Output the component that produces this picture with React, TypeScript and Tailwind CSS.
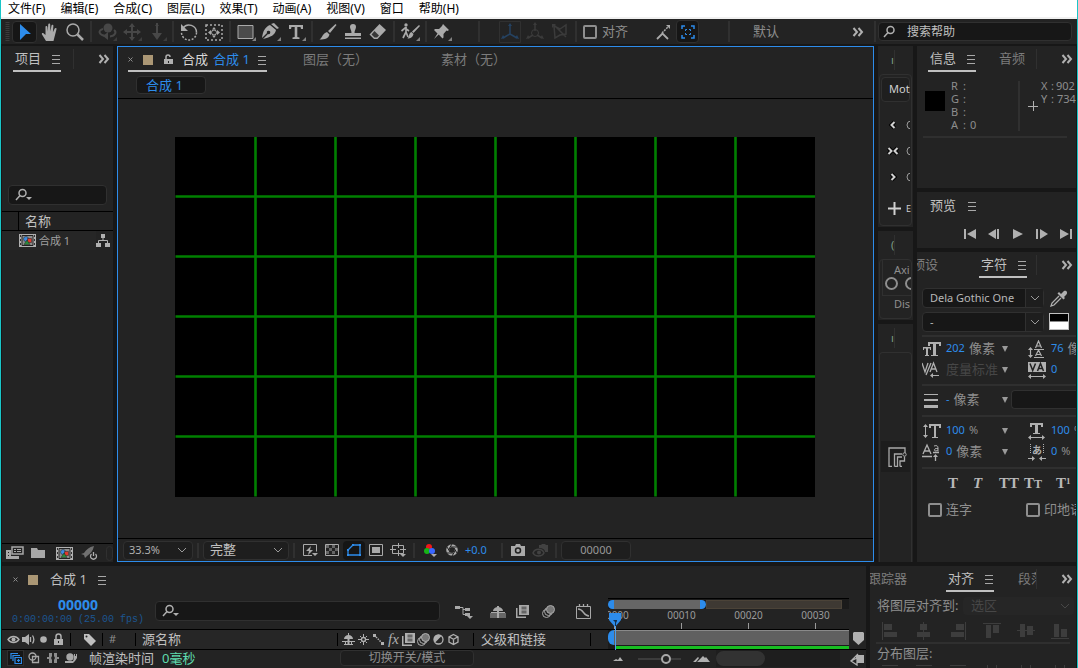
import React, { useState } from 'react';

type Kids = { children?: React.ReactNode };

const menus = ['文件(F)', '编辑(E)', '合成(C)', '图层(L)', '效果(T)', '动画(A)', '视图(V)', '窗口', '帮助(H)'];

/* ---------- small shared pieces ---------- */

const Svg = ({ w = 20, h = 20, className = '', children }: Kids & { w?: number; h?: number; className?: string }) => (
  <svg width={w} height={h} viewBox={`0 0 ${w} ${h}`} fill="currentColor" className={`shrink-0 ${className}`} aria-hidden="true">
    {children}
  </svg>
);

const Line = ({ d, w = 1 }: { d: string; w?: number }) => <path d={d} fill="none" stroke="currentColor" strokeWidth={w} />;

const ToolSep = () => (
  <div className="w-[7px] shrink-0 flex justify-center self-stretch py-[2px]">
    <div className="w-[2px] bg-[#303030]" />
  </div>
);

const FootSep = () => (
  <div className="w-[10px] shrink-0 flex justify-center">
    <div className="w-[2px] h-[15px] bg-[#303030]" />
  </div>
);

const MenuLines = () => (
  <button aria-label="面板菜单" className="text-[#a8a8a8]">
    <Svg w={10} h={10}>
      <Line d="M1 1.5h8M1 5.5h8M1 9.5h8" />
    </Svg>
  </button>
);

const More = () => (
  <button aria-label="更多" className="text-[#b0b0b0]">
    <Svg w={12} h={10}>
      <Line d="M1.5 1l3.500 4-3.500 4M6.500 1l3.500 4-3.500 4" w={2} />
    </Svg>
  </button>
);

const Chevron = ({ className = 'text-[#9a9a9a]' }: { className?: string }) => (
  <Svg w={10} h={10} className={className}>
    <Line d="M1 3l4 4 4-4" />
  </Svg>
);

const Drop = () => (
  <Svg w={8} h={8} className="text-[#9a9a9a]">
    <path d="M1 1h6l-3 6z" />
  </Svg>
);

const SearchIcon = ({ arrow = false }: { arrow?: boolean }) => (
  <Svg w={18} h={14} className="text-[#b0b0b0]">
    <circle cx="7.5" cy="5" r="3.5" fill="none" stroke="currentColor" strokeWidth="1.5" />
    <Line d="M5 7.500L1 12" w={1.5} />
    {arrow && <path d="M11 9h6l-3 3z" />}
  </Svg>
);

const Rule = () => <div className="h-[2px] bg-[#2f2f2f]" />;

const Tool = ({ label, tone = 'text-[#aaaaaa]', more = false, children }: Kids & { label: string; tone?: string; more?: boolean }) => (
  <button aria-label={label} className={`w-[25px] shrink-0 flex justify-center items-center ${tone}`}>
    <Svg w={22} h={22}>
      {children}
      {more && <path d="M21 16v4h-4z" opacity=".7" />}
    </Svg>
  </button>
);

const FootBtn = ({ label, active = false, tone = 'text-[#aaaaaa]', children }: Kids & { label: string; active?: boolean; tone?: string }) => (
  <button
    aria-label={label}
    className={`w-[22px] h-[19px] shrink-0 flex justify-center items-center rounded-sm ${active ? 'bg-[#151515] text-[#2d8ceb]' : tone}`}
  >
    <Svg w={18} h={16}>{children}</Svg>
  </button>
);

const CompThumb = () => (
  <Svg w={17} h={13} className="text-[#b0b0b0]">
    <path d="M0 0h17v13H0z" />
    <path d="M3 1.500h11v10H3z" fill="#8d8d8d" stroke="#222" />
    <path d="M1 1h1v2H1zM1 5h1v2H1zM1 9h1v2H1zM15 1h1v2h-1zM15 5h1v2h-1zM15 9h1v2h-1z" fill="#333" />
    <circle cx="7" cy="5" r="2.500" fill="#3d8be0" stroke="#222" strokeWidth=".5" />
    <path d="M8.500 4.500h4v4h-4z" fill="#e03a2c" stroke="#222" strokeWidth=".5" />
    <path d="M8 6l3 4.500H5z" fill="#2c8a3a" stroke="#222" strokeWidth=".5" />
  </Svg>
);

/* ---------- top bars ---------- */

const MenuBar = () => (
  <nav className="h-[19px] shrink-0 bg-white border-b-2 border-[#f0f0f0] flex items-center gap-[15px] pl-[7px] text-[12px] leading-[17px] text-black">
    {menus.map(m => (
      <button key={m} className="whitespace-nowrap">{m}</button>
    ))}
  </nav>
);

const Toolbar = () => {
  const [snap, setSnap] = useState(false);

  return (
    <div className="h-[25px] shrink-0 bg-[#232323] flex items-center">
      <div className="w-[11px] shrink-0 text-[#3c3c3c]">
        <Svg w={10} h={20}>
          <path d="M6.500 0v20" stroke="currentColor" strokeWidth="4" strokeDasharray="1 1" />
        </Svg>
      </div>
      <div className="h-[22px] flex bg-[#161616] border border-[#303030] rounded-sm">
        <button aria-label="选取工具" className="w-[23px] flex justify-center items-center text-[#2d8ceb]">
          <Svg w={14} h={18}>
            <path d="M2 1l11 10H8l-6 6z" />
          </Svg>
        </button>
      </div>
      <Tool label="手形工具">
        <path d="M7 20L3 13.500c-.8-1.400.8-2.200 1.700-1.100L6.500 14V6c0-1.400 1.800-1.400 1.900 0l.4 4.500.4-7c.1-1.400 1.900-1.400 2 0l.2 7 1.100-6c.3-1.300 2-1 1.900.3l-.5 6.500 1.800-3.700c.6-1.200 2.200-.5 1.800.7L15.500 16l-1 4z" />
      </Tool>
      <Tool label="缩放工具">
        <circle cx="9" cy="9" r="6" fill="none" stroke="currentColor" strokeWidth="1.5" />
        <Line d="M13.500 13.500L19 19" w={2.5} />
      </Tool>
      <ToolSep />
      <Tool label="绕光标旋转工具" tone="text-[#474747]" more>
        <circle cx="12" cy="7" r="4.500" />
        <Line d="M7 8c-5 1-5 6 3 7M18 9c3 2 1 6-4 6.500" w={2} />
        <path d="M12 11v8l-5-4z" />
      </Tool>
      <Tool label="平移工具" tone="text-[#474747]" more>
        <Line d="M11 3v16M3 11h16" w={2} />
        <path d="M11 2l3 4H8zM11 20l3-4H8zM2 11l4-3v6zM20 11l-4-3v6z" />
      </Tool>
      <Tool label="推拉工具" tone="text-[#474747]" more>
        <Line d="M11 2v14" w={2} />
        <path d="M6 12h10l-5 7zM9 5l2-3 2 3z" />
      </Tool>
      <ToolSep />
      <Tool label="旋转工具">
        <path d="M5 7a7.500 7.500 0 0 1 13.500 4.500" fill="none" stroke="currentColor" strokeWidth="1.5" />
        <path d="M18.500 11.500a7.500 7.500 0 0 1-15 0" fill="none" stroke="currentColor" strokeWidth="1.5" strokeDasharray="2 1.500" />
        <path d="M3 3v7h7z" />
      </Tool>
      <Tool label="锚点工具">
        <path d="M3 4h16v15H3z" fill="none" stroke="currentColor" strokeWidth="1.5" strokeDasharray="2 2" />
        <path d="M11 6l2 2.500H9zM11 17l2-2.500H9zM5 11.500L8 9v5zM17 11.500L14 9v5z" />
        <circle cx="11" cy="11.500" r="2.500" fill="none" stroke="currentColor" />
      </Tool>
      <ToolSep />
      <Tool label="矩形工具" more>
        <path d="M3 4.500h15v13H3z" fill="#4b4b4b" stroke="currentColor" />
      </Tool>
      <Tool label="钢笔工具" more>
        <path d="M14 2l5 5-2 1-6-5zM10 4l6 5c-1 5-5 7-13 9l5-5a1.700 1.700 0 1 0-1-1l-5 5C3 10 5 6 10 4z" />
      </Tool>
      <Tool label="文字工具" more>
        <path d="M4 4h14v4h-2l-.5-2h-3.200v10l2.200.5V18h-7v-1.500l2.200-.5V6H6.500L6 8H4z" />
      </Tool>
      <ToolSep />
      <Tool label="画笔工具">
        <path d="M18.500 3L11 10l2 2 6.500-8zM10 11l2.500 2.500c-1 4-4 5-10 5 3-2 3-6 7.500-7.500z" />
      </Tool>
      <Tool label="仿制图章工具">
        <path d="M8 6a3 3 0 1 1 6 0c0 2-1.500 3-1.500 6H19v3H3v-3h6.500C9.500 9 8 8 8 6zM3 16.500h16V18H3z" />
      </Tool>
      <Tool label="橡皮擦工具">
        <path d="M12.500 3L19 9l-8.500 9H7l-4.500-4.500z" />
        <path d="M7.500 10l4.500 4.500-2 2H7.500L4.500 13.500z" fill="#383838" />
      </Tool>
      <ToolSep />
      <Tool label="Roto 笔刷工具" more>
        <circle cx="7" cy="4" r="1.700" />
        <Line d="M7 6v5l-3 6M7 11l2 5M2.500 10L6 7l4 3" w={1.7} />
        <path d="M20 4l-7 6.500 1.500 1.500L21 5zM12.500 11l2 2c-1 3.500-3 4.500-6 4.500 2-2 1-5.500 4-6.500z" />
      </Tool>
      <ToolSep />
      <Tool label="人偶位置控点工具" more>
        <path d="M12 3l6 6-1.500 1-1-.5-3 3.500v3.500l-1 1-3.800-4L3 18l3.500-5.500L3 9l1-1h4l3-3z" />
      </Tool>
      <div className="w-[21px] shrink-0" />
      <ToolSep />
      <div className="w-[15px] shrink-0" />
      <Tool label="本地轴模式" tone="text-[#254261]">
        <path d="M.5.5h21v21H.5z" fill="none" stroke="#303030" />
        <Line d="M11 4v9M11 13l-7 4M11 13l7 4" w={1.5} />
        <path d="M11 2l2 3H9zM2 18l2-4 2 3zM20 18l-2-4-2 3z" />
      </Tool>
      <Tool label="世界轴模式" tone="text-[#3b3b3b]">
        <circle cx="11" cy="12" r="3.5" fill="none" stroke="currentColor" />
        <Line d="M11 4v6M9 14l-5 3M13 14l5 3" w={1.5} />
        <path d="M11 1l2 3H9zM2 18l2-4 2 3zM20 18l-2-4-2 3z" />
      </Tool>
      <Tool label="视图轴模式" tone="text-[#3b3b3b]">
        <Line d="M5 5l6 3 6-4v9l-6 1-5 3zM5 4l12 12" w={1.5} />
        <path d="M3 3h4L3 7z" />
      </Tool>
      <ToolSep />
      <label className="ml-1 flex items-center gap-[5px] text-[13px] text-[#8e8e8e] whitespace-nowrap">
        <input
          type="checkbox"
          checked={snap}
          onChange={e => setSnap(e.target.checked)}
          className="appearance-none size-[14px] border-2 border-[#8e8e8e] rounded-xs checked:bg-[#2d8ceb]"
        />
        对齐
      </label>
      <div className="w-[23px] shrink-0" />
      <Tool label="边缘延伸">
        <Line d="M4 18l5.500-5.500L15 18" w={1.8} />
        <path d="M9 12l6-6" stroke="currentColor" strokeWidth="1.5" strokeDasharray="2 1" />
        <path d="M13 4h4v4z" />
      </Tool>
      <button aria-label="折叠" className="w-[23px] h-[23px] shrink-0 flex items-center justify-center bg-[#161616] border border-[#303030] rounded-sm text-[#2d8ceb]">
        <Svg w={14} h={14}>
          <Line d="M1 4V1h3M10 1h3v3M13 10v3h-3M4 13H1v-3" w={1.5} />
          <Line d="M4.500 6V4.500H6M8 4.500h1.500V6M9.500 8v1.500H8M6 9.500H4.500V8" />
        </Svg>
      </button>
      <div className="w-[26px] shrink-0" />
      <ToolSep />
      <button className="ml-[21px] text-[13px] text-[#8e8e8e] whitespace-nowrap">默认</button>
      <div className="flex-1" />
      <More />
      <div className="w-[7px] shrink-0" />
      <ToolSep />
      <label className="w-[194px] h-[19px] shrink-0 mr-[5px] px-1 flex items-center gap-[6px] bg-[#171717] border border-[#303030] rounded-sm">
        <SearchIcon />
        <input aria-label="搜索帮助" placeholder="搜索帮助" className="w-full min-w-0 bg-transparent text-[12px] placeholder:text-[#c0c0c0] outline-none" />
      </label>
    </div>
  );
};

/* ---------- project panel ---------- */

const ProjectPanel = () => (
  <section className="w-[111px] shrink-0 bg-[#232323] flex flex-col overflow-hidden">
    <header className="h-[26px] shrink-0 flex items-center pl-[11px] pr-[3px]">
      <div className="h-[26px] w-[48px] pt-[2px] flex items-center justify-between pl-[2px] border-b-2 border-[#c0c0c0] text-[13px] text-[#c0c0c0] whitespace-nowrap">
        项目 <MenuLines />
      </div>
      <div className="ml-3 w-px h-5 bg-[#303030]" />
      <div className="flex-1" />
      <More />
    </header>
    <div className="h-[113px] shrink-0" />
    <label className="h-[20px] shrink-0 mx-[6px] px-[6px] flex items-center bg-[#171717] border border-[#303030] rounded-sm">
      <SearchIcon arrow />
      <input aria-label="搜索项目" className="w-full min-w-0 bg-transparent text-[11px] text-[#c0c0c0] outline-none" />
    </label>
    <table className="mt-[6px] w-full text-left border-collapse">
      <thead>
        <tr className="h-[19px] border-y border-black text-[13px] leading-[18px] text-[#c0c0c0]">
          <th colSpan={2} className="p-0 font-normal">
            <span className="ml-[16px] pl-[6px] border-l border-black">名称</span>
          </th>
        </tr>
      </thead>
      <tbody>
        <tr className="h-[19px] bg-[#262626] text-[11px] leading-[19px] text-[#a0a0a0]">
          <td className="p-0 pl-[17px]">
            <span className="flex items-center gap-[3px] whitespace-nowrap"><CompThumb />合成 1</span>
          </td>
          <td className="p-0 w-[17px] bg-[#232323]">
            <Svg w={14} h={13} className="text-[#b0b0b0]">
              <path d="M5 0h4v4H5zM0 9h5v4H0zM9 9h5v4H9z" />
              <Line d="M7 4v3M2.500 9V6.500h9V9" />
            </Svg>
          </td>
        </tr>
      </tbody>
    </table>
    <footer className="mt-auto h-[19px] shrink-0 border-t border-black flex items-center gap-[7px] pl-[4px] text-[#a8a8a8]">
      <button aria-label="解释素材">
        <Svg w={18} h={14}>
          <path d="M6 1h11v7H6z" fill="none" stroke="currentColor" strokeWidth="1.5" />
          <path d="M0 4h5v6h8v3H0zM8 3h2v1H8zM11 3h4v1h-4zM8 5h2v1H8zM11 5h4v1h-4z" />
          <path d="M2 6h1v1H2zM2 9h1v1H2z" fill="#222" />
        </Svg>
      </button>
      <button aria-label="新建文件夹">
        <Svg w={14} h={12}>
          <path d="M0 1h6l1 2h7v8H0z" />
        </Svg>
      </button>
      <button aria-label="新建合成" className="ml-1"><CompThumb /></button>
      <button aria-label="GPU 加速" className="ml-px text-[#707070]">
        <Svg w={18} h={14}>
          <path d="M13 0C8 1 5 4 3 7L0 8l3 1 1 3 2-2c3-2 6-5 7-10z" />
          <path d="M10.500 8a3 3 0 1 0 4 0M12.500 6v4" fill="none" stroke="#b0b0b0" strokeWidth="1.300" />
        </Svg>
      </button>
      <div className="w-4 h-[15px] bg-[#232323] border border-[#303030] rounded-sm" />
    </footer>
  </section>
);

/* ---------- composition viewer ---------- */

const CompPanel = () => (
  <section className="flex-1 min-w-0 mx-[4px] bg-[#232323] border border-[#2d8ceb] flex flex-col overflow-hidden">
    <header className="h-[25px] shrink-0 flex items-center pl-[10px] text-[13px] text-[#7c7c7c] whitespace-nowrap">
      <div className="h-[25px] w-[139px] pt-[2px] flex items-center border-b-2 border-[#c0c0c0] text-[#d8d8d8]">
        <button aria-label="关闭" className="w-[15px] text-[#8a8a8a]">
          <Svg w={5} h={5}><Line d="M.5.5l4 4M4.500.5l-4 4" /></Svg>
        </button>
        <div className="size-[10px] bg-[#ab9775]" />
        <button aria-label="锁定" className="ml-[11px] text-[#b0b0b0]">
          <Svg w={9} h={11}>
            <path d="M0 5h9v5H0z" />
            <Line d="M2 5V3a2 2 0 0 1 4 0" w={1.5} />
            <path d="M4 7h1v2H4z" fill="#222" />
          </Svg>
        </button>
        <span className="ml-[9px]">合成</span>
        <span className="ml-[5px] mr-auto text-[#2d8ceb]">合成 1</span>
        <MenuLines />
      </div>
      <span className="ml-[36px]">图层（无）</span>
      <span className="ml-[73px]">素材（无）</span>
    </header>
    <div className="h-[27px] shrink-0 pl-[18px] flex items-center border-b border-black">
      <button className="w-[70px] h-[18px] pl-[9px] text-left bg-[#171717] border border-[#303030] rounded-sm text-[13px] leading-[16px] text-[#2d8ceb] whitespace-nowrap">合成 1</button>
    </div>
    <div className="flex-1 min-h-0 flex items-center justify-center pr-[2px] pb-[3px]">
      <svg width="640" height="360" viewBox="0 0 640 360" className="bg-black" role="img" aria-label="合成 1">
        <path
          d="M80 0v360M160 0v360M240 0v360M320 0v360M400 0v360M480 0v360M560 0v360M0 60h640M0 120h640M0 180h640M0 240h640M0 300h640"
          stroke="#007f00"
          strokeWidth="2.600"
          transform="translate(.5 -.5)"
        />
      </svg>
    </div>
    <footer className="h-[23px] shrink-0 border-t border-black flex items-center pl-[5px] text-[11px] text-[#b0b0b0]">
      <div className="w-[70px] h-[19px] shrink-0 flex items-center px-[5px] bg-[#1e1e1e] border border-[#303030] rounded-sm">
        <select aria-label="放大率" className="appearance-none flex-1 min-w-0 bg-transparent outline-none"><option>33.3%</option></select>
        <Chevron />
      </div>
      <FootSep />
      <div className="w-[86px] h-[19px] shrink-0 flex items-center pl-[6px] pr-[5px] bg-[#1e1e1e] border border-[#303030] rounded-sm">
        <select aria-label="分辨率" className="appearance-none flex-1 min-w-0 bg-transparent outline-none text-[13px] text-[#c0c0c0]"><option>完整</option></select>
        <Chevron />
      </div>
      <FootSep />
      <FootBtn label="快速预览">
        <Line d="M11 13.500H2.500v-11h13v7" />
        <path d="M10 4l-5 5h3l-1 4 5-5H9zM11 11h6l-3 3z" />
      </FootBtn>
      <FootBtn label="切换透明网格">
        <path d="M2.500 2.500h13v11h-13z" fill="none" stroke="currentColor" />
        <path d="M3 3h3v3H3zM9 3h3v3H9zM6 6h3v3H6zM12 6h3v3h-3zM3 9h3v3H3zM9 9h3v3H9z" opacity=".5" />
      </FootBtn>
      <FootBtn label="切换蒙版" active>
        <Line d="M3 13V8l5-5h7v10z" w={1.3} />
        <path d="M2 12h2v2H2zM2 7h2v2H2zM7 2h2v2H7zM14 2h2v2h-2zM14 12h2v2h-2z" />
      </FootBtn>
      <FootBtn label="目标区域">
        <path d="M2.500 2.500h13v11h-13z" fill="none" stroke="currentColor" />
        <path d="M5 5h8v6H5z" />
      </FootBtn>
      <FootBtn label="网格和参考线">
        <path d="M3.500 3.500h11v8h-11z" fill="none" stroke="currentColor" />
        <Line d="M9.500 1v5M9.500 8v6M1 7.500h6M11 7.500h6" />
        <path d="M11 12h6l-3 3z" />
      </FootBtn>
      <FootSep />
      <FootBtn label="颜色通道">
        <circle cx="8" cy="5" r="3" fill="#f01818" />
        <circle cx="6" cy="9" r="3" fill="#17b517" />
        <circle cx="11" cy="9" r="3" fill="#3a66ff" />
        <path d="M10 12h6l-3 3z" />
      </FootBtn>
      <FootBtn label="重置曝光度">
        <circle cx="9" cy="8" r="4.300" fill="none" stroke="currentColor" strokeWidth="3" />
        <path d="M9 2l-3 5M14 5H8M14 11l-3-5M9 14l3-5M4 11h6M4 5l3 5" stroke="#222" />
      </FootBtn>
      <span className="w-[34px] pl-[2px] text-[#2d8ceb]">+0.0</span>
      <FootSep />
      <FootBtn label="拍摄快照">
        <path d="M2 4h4l1-2h4l1 2h4v10H2z" />
        <circle cx="9" cy="8.500" r="2.500" fill="none" stroke="#222" strokeWidth="1.5" />
      </FootBtn>
      <FootBtn label="显示快照" tone="text-[#424242]">
        <path d="M2 11c2-5 9-5 11 0-2 4-9 4-11 0z" fill="none" stroke="currentColor" strokeWidth="1.5" />
        <circle cx="8" cy="10.500" r="2" />
        <path d="M8 3h2l1-1h3l1 1h2v7h-3c0-3-3-4-6-4z" />
      </FootBtn>
      <FootSep />
      <button className="w-[70px] h-[19px] shrink-0 bg-[#1e1e1e] border border-[#303030] rounded-sm text-center text-[#989898]">00000</button>
    </footer>
  </section>
);

/* ---------- narrow script column ---------- */

const StripTab = ({ children }: Kids) => (
  <header className="h-[28px] shrink-0 pl-[12px] flex items-center text-[11px] text-[#7f9f86]">
    <span className="w-[3px] leading-[12px]">{children}</span>
    <div className="w-px h-5 bg-[#303030]" />
  </header>
);

const Strip = () => (
  <aside className="w-[35px] shrink-0 flex flex-col gap-[4px] text-[#d0d0d0]">
    <section className="h-[181px] shrink-0 bg-[#232323] flex flex-col p-px pt-0 overflow-hidden">
      <StripTab>ı</StripTab>
      <div className="flex-1 border border-[#303030] rounded-sm p-px pt-0 overflow-hidden">
        <button className="w-full h-[25px] mb-[10px] pl-[7px] text-left border border-[#303030] rounded-sm bg-[#1f1f1f] text-[11px]">Mot</button>
        {['M9.500 3l-3 3 3 3', 'M3.500 3l3 3-3 3M12.500 3l-3 3 3 3', 'M6.500 3l3 3-3 3'].map(d => (
          <button key={d} aria-label="缓动" className="h-[26px] w-full flex items-center gap-[6px] pl-[4px]">
            <Svg w={15} h={12}>
              <path d={d} fill="none" stroke="#000" strokeWidth="4" />
              <Line d={d} w={2} />
            </Svg>
            <svg width="4" height="10" className="shrink-0"><circle cx="5" cy="5" r="4" fill="none" stroke="#999" /></svg>
          </button>
        ))}
        <button className="h-[36px] w-full flex items-center gap-[5px] pl-[7px] pt-[2px] text-[9px]">
          <Svg w={13} h={13}><Line d="M6.500 0v13M0 6.500h13" w={2} /></Svg>E
        </button>
      </div>
    </section>
    <section className="h-[89px] shrink-0 bg-[#232323] flex flex-col p-px pt-0 overflow-hidden">
      <StripTab>(</StripTab>
      <div className="flex-1 border border-[#303030] rounded-sm pl-[2px] overflow-hidden text-[11px] text-[#8e8e8e]">
        <div className="h-[36px] pt-[3px] border-b border-l border-[#303030]">
          <div className="pl-[11px] leading-[14px]">Axi</div>
          <label className="pl-[2px] flex gap-[7px]">
            <input type="radio" name="axis" aria-label="X" className="appearance-none size-[13px] shrink-0 rounded-full border-2 border-[#8e8e8e]" />
            <input type="radio" name="axis" aria-label="Y" className="appearance-none size-[13px] shrink-0 rounded-full border-2 border-[#8e8e8e]" />
          </label>
        </div>
        <div className="pl-[12px] pt-px leading-[14px]">Dis</div>
      </div>
    </section>
    <section className="flex-1 min-h-0 bg-[#232323] flex flex-col p-px pt-0 pb-0 overflow-hidden">
      <StripTab>ı</StripTab>
      <div className="flex-1 border border-b-0 border-[#303030] rounded-t-sm flex flex-col">
        <button aria-label="脚本" className="mt-[88px] mx-px h-[31px] pl-[2px] flex items-center justify-center bg-[#1d1d1d] text-[#a8a8a8]">
          <Svg w={20} h={20}>
            <Line d="M2 20V1h16v5M2 19.500h3M7.500 19.500V7H15M7.500 19.500h3V10H15M13 19.500V14h4.500V9.500M13 19.500h2" w={1.300} />
            <circle cx="17.500" cy="7.500" r="1.700" fill="none" stroke="currentColor" />
          </Svg>
        </button>
      </div>
    </section>
  </aside>
);

/* ---------- right column ---------- */

const ActiveTab = ({ children }: Kids) => (
  <div className="h-[26px] w-[48px] pt-[2px] shrink-0 flex items-center justify-between pl-[2px] border-b-2 border-[#c0c0c0] text-[#c0c0c0]">
    {children} <MenuLines />
  </div>
);

const InfoPanel = () => (
  <section className="h-[142px] shrink-0 bg-[#232323] overflow-hidden">
    <header className="h-[26px] pl-[11px] pr-[3px] flex items-center text-[13px] whitespace-nowrap">
      <ActiveTab>信息</ActiveTab>
      <span className="ml-[23px] text-[#7c7c7c]">音频</span>
      <div className="ml-[11px] w-px h-5 bg-[#303030]" />
      <div className="flex-1" />
      <More />
    </header>
    <div className="h-[64px] pl-[8px] pt-[7px] flex text-[11px] leading-[13px] text-[#8e8e8e] whitespace-nowrap">
      <div className="mt-[12px] size-[20px] shrink-0 bg-black" />
      <dl className="ml-[6px] w-[67px] shrink-0 grid grid-cols-[12px_6px_1fr] content-start">
        <dt>R</dt><dd>:</dd><dd />
        <dt>G</dt><dd>:</dd><dd />
        <dt>B</dt><dd>:</dd><dd />
        <dt>A</dt><dd>:</dd><dd className="pl-[1px]">0</dd>
      </dl>
      <div className="w-[2px] h-[50px] mt-[2px] shrink-0 bg-[#303030]" />
      <Svg w={10} h={10} className="ml-[8px] mt-[22px] text-[#b0b0b0]"><Line d="M5.500 0v10M0 5.500h10" /></Svg>
      <dl className="ml-[3px] grid grid-cols-[10px_5px_1fr] content-start">
        <dt>X</dt><dd>:</dd><dd>902</dd>
        <dt>Y</dt><dd>:</dd><dd className="pl-[1px]">734</dd>
      </dl>
    </div>
    <div className="ml-[6px] mr-[9px]"><Rule /></div>
  </section>
);

const transport = [
  { label: '第一帧', d: 'M1 1h2v10H1zM13 1v10L4 6z' },
  { label: '上一帧', d: 'M10 1h2v10h-2zM9 1v10L1 6z' },
  { label: '播放', d: 'M2 1l10 5-10 5z' },
  { label: '下一帧', d: 'M1 1h2v10H1zM5 1l8 5-8 5z' },
  { label: '最后一帧', d: 'M11 1h2v10h-2zM1 1l9 5-9 5z' },
];

const PreviewPanel = () => (
  <section className="h-[56px] shrink-0 bg-[#232323] overflow-hidden text-[13px] text-[#c0c0c0]">
    <header className="h-[28px] pl-[13px] flex items-center gap-[11px]">预览 <MenuLines /></header>
    <div className="h-[27px] pl-[46px] flex items-center gap-[10px] text-[#b0b0b0]">
      {transport.map(t => (
        <button key={t.label} aria-label={t.label} className="shrink-0">
          <Svg w={14} h={12}><path d={t.d} /></Svg>
        </button>
      ))}
    </div>
  </section>
);

const Value = ({ label, icon, value, unit = '', drop = false, off = false }: { label: string; icon: React.ReactNode; value: string; unit?: string; drop?: boolean; off?: boolean }) => (
  <div className="h-[21px] flex items-center text-[11px] whitespace-nowrap overflow-hidden">
    <Svg w={20} h={18} className="text-[#b0b0b0]">{icon}</Svg>
    <button aria-label={label} className={`ml-[4px] flex items-center gap-[4px] ${off ? 'text-[#474747] text-[13px]' : 'text-[#2d8ceb]'}`}>
      {value}
      {unit && <span className={unit === '%' ? 'text-[#8e8e8e]' : 'text-[13px] text-[#8e8e8e]'}>{unit}</span>}
    </button>
    {drop && <span className="ml-auto"><Drop /></span>}
  </div>
);

const Pair = ({ children }: Kids) => <div className="grid grid-cols-[87px_1fr] gap-x-[18px]">{children}</div>;

const CharacterPanel = () => {
  const [liga, setLiga] = useState(false);
  const [hindi, setHindi] = useState(false);

  return (
    <section className="flex-1 min-h-0 bg-[#232323] overflow-hidden">
      <header className="h-[26px] pr-[3px] flex items-center text-[13px] whitespace-nowrap">
        <div className="w-[21px] overflow-hidden flex justify-end text-[#7c7c7c]"><span>预设</span></div>
        <div className="ml-[41px]"><ActiveTab>字符</ActiveTab></div>
        <div className="ml-[9px] w-px h-5 bg-[#303030]" />
        <div className="flex-1" />
        <More />
      </header>
      <div className="pl-[5px] pt-[10px] text-[11px]">
        <div className="flex">
          <div className="w-[122px] shrink-0 flex flex-col gap-[4px] text-[#b8b8b8]">
            {['Dela Gothic One', '-'].map((f, i) => (
              <div key={f} className="h-[20px] flex items-center bg-[#171717] border border-[#303030] rounded-sm">
                <select aria-label={i === 0 ? '字体系列' : '字体样式'} className="appearance-none flex-1 min-w-0 h-full pl-[7px] bg-transparent outline-none"><option>{f}</option></select>
                <div className="w-[18px] h-full flex items-center justify-center bg-[#1e1e1e] border-l border-[#303030]"><Chevron /></div>
              </div>
            ))}
          </div>
          <div className="ml-[5px] flex flex-col gap-[6px] pt-[1px]">
            <button aria-label="吸管" className="text-[#b0b0b0]">
              <Svg w={20} h={18}>
                <path d="M12 5l2-2c2-3 6 0 3 3l-2 2 1 1-1.500 1.500-6-6L10 3z" />
                <Line d="M10 7l-7 7-1 3 3-1 7-7" w={1.300} />
              </Svg>
            </button>
            <button aria-label="填充颜色" className="w-[20px] h-[17px] flex flex-col border border-[#c0c0c0]">
              <span className="w-full flex-1 bg-black" />
              <span className="w-full flex-1 bg-white border-t border-[#888888]" />
            </button>
          </div>
        </div>
        <div className="mt-[3px] mb-[1px]"><Rule /></div>
        <Pair>
          <Value label="字体大小" value="202" unit="像素" drop icon={<><path d="M6 2h13v4h-2V4h-3v11h2v1H9v-1h2V4H8v2H6z" /><path d="M1 7h8v3H8V8.500H6V15h1v1H3v-1h1V8.500H2V10H1z" /></>} />
          <Value label="行距" value="76" unit="像" icon={<><Line d="M7 9.500h10M7 17.500h10M3.500 8v9M8.500 8l3-7 3 7M9.500 6h4M8.500 16l3-6 3 6M9.500 14.500h4" w={1.200} /><path d="M1 10l2.500-3L6 10zM1 15l2.500 3L6 15z" /></>} />
          <Value label="字偶间距" value="度量标准" off drop icon={<><Line d="M0 2l3 9 3-9M4 14L9 2M8 11l3.500-9 3.500 9M9 8h5" w={1.300} /><Line d="M10 14.500h7" /><path d="M8 14.500l3-2.500v5z" /></>} />
          <Value label="字符间距" value="0" icon={<><path d="M1 1h18v10H1z" /><path d="M3 2.500l2.700 7L8.500 2.500M10.500 10l3-7.500 3 7.500M11.500 7.500h4" fill="none" stroke="#222" strokeWidth="1.500" /><Line d="M2 15.500h16" /><path d="M1 15.500L4 13v5zM19 15.500L16 13v5z" /></>} />
        </Pair>
        <div className="mt-[4px] mb-[3px]"><Rule /></div>
        <div className="flex items-center">
          <div className="w-[87px] shrink-0">
            <Value label="描边宽度" value="-" unit="像素" drop icon={<path d="M2 3h14v1H2zM2 8h14v2H2zM2 14h14v3H2z" />} />
          </div>
          <div className="ml-[2px] h-[19px] flex-1 bg-[#171717] border border-r-0 border-[#303030] rounded-l-sm" />
        </div>
        <div className="mt-[5px] mb-[3px]"><Rule /></div>
        <Pair>
          <Value label="垂直缩放" value="100" unit="%" drop icon={<><path d="M7 2h12v4h-2V4h-3v11h2v1h-6v-1h2V4H9v2H7z" /><Line d="M3.500 3v12" /><path d="M1 5l2.500-3L6 5zM1 13l2.500 3L6 13z" /></>} />
          <Value label="水平缩放" value="100" unit="%" icon={<><path d="M3 1h13v4h-2V3h-3v8h2v1H6v-1h2V3H5v2H3z" /><Line d="M2 15.500h15" /><path d="M1 15.500L4 13v5zM18 15.500L15 13v5z" /></>} />
          <Value label="基线偏移" value="0" unit="像素" drop icon={<><Line d="M1 11l4-9 4 9M2.500 8h5M0 13.500h10M11 9.500h6M13.500 12v6" w={1.300} /><Line d="M12 3c3-1 4 0 4 2v3.500M16 5.500c-5-.5-4 3-2 2.500l2-1" /><path d="M11 14l2.500-3 2.500 3z" /></>} />
          <Value label="比例间距" value="0" unit="%" icon={<><text x="5" y="11" fontSize="10" fontWeight="700">あ</text><path d="M3.500 1v10M16.500 1v10" stroke="currentColor" strokeDasharray="1 1" /><Line d="M1 15.500h5M14 15.500h5" /><path d="M8 15.500L5 13v5zM12 15.500l3-2.500v5z" /></>} />
        </Pair>
        <div className="mt-[5px] mb-[1px]"><Rule /></div>
        <div className="h-[26px] flex items-center pl-[26px] text-[15px] leading-[18px] text-[#b8b8b8] font-bold whitespace-nowrap [font-family:'Liberation_Serif',serif]">
          <button aria-label="仿粗体" className="w-[25px] text-left">T</button>
          <button aria-label="仿斜体" className="w-[26px] text-left italic">T</button>
          <button aria-label="全部大写字母" className="w-[25px] text-left">TT</button>
          <button aria-label="小型大写字母" className="w-[32px] text-left">T<span className="text-[12px]">T</span></button>
          <button aria-label="上标" className="text-left">T<sup className="text-[9px]">1</sup></button>
        </div>
        <div className="h-[28px] flex items-center pl-[6px] text-[13px] text-[#8e8e8e] whitespace-nowrap">
          <label className="w-[98px] shrink-0 flex items-center gap-[4px]">
            <input type="checkbox" checked={liga} onChange={e => setLiga(e.target.checked)} className="appearance-none size-[14px] shrink-0 border-2 border-[#8e8e8e] rounded-xs checked:bg-[#2d8ceb]" />
            连字
          </label>
          <label className="flex items-center gap-[4px]">
            <input type="checkbox" checked={hindi} onChange={e => setHindi(e.target.checked)} className="appearance-none size-[14px] shrink-0 border-2 border-[#8e8e8e] rounded-xs checked:bg-[#2d8ceb]" />
            印地语
          </label>
        </div>
      </div>
    </section>
  );
};

/* ---------- timeline ---------- */

const ColSep = () => <div className="w-px h-[13px] shrink-0 bg-black" />;

const Cell = ({ children }: Kids) => (
  <div className="w-[15px] shrink-0 flex justify-center">
    <Svg w={13} h={13}>{children}</Svg>
  </div>
);

const shy = <><path d="M2 6a4.500 4 0 0 1 9 0zM5.500 6h2v6h-2z" /><Line d="M0 8.500h13M2 11.500h9M3.500 8v4M9.500 8v4M6.500 0v3" /></>;
const film = <><path d="M3 0h10v10H3zM0 3h1.500v8.500H10V13H0z" /><path d="M5.500 1.500h5v3h-5zM5.500 5.500h5v3h-5z" fill="#666" /></>;
const blur = <><circle cx="4.500" cy="8.500" r="4" fill="none" stroke="currentColor" /><circle cx="6.500" cy="6.500" r="4" fill="none" stroke="currentColor" /><circle cx="8.500" cy="4.500" r="4" fill="#777" stroke="currentColor" /></>;

const TimelineLeft = () => (
  <div className="flex flex-col text-[#b0b0b0]">
    <div className="h-[36px] shrink-0 flex">
      <div className="w-[152px] shrink-0 flex flex-col items-center pt-[4px]">
        <button className="text-[14px] leading-[16px] font-bold text-[#2d8ceb]">00000</button>
        <span className="text-[10px] leading-[13px] text-[#1c5590] whitespace-nowrap [font-family:'Liberation_Mono',monospace]">0:00:00:00 (25.00 fps)</span>
      </div>
      <label className="mt-[8px] ml-px w-[285px] h-[20px] shrink-0 px-[6px] flex items-center bg-[#171717] border border-[#303030] rounded-sm">
        <SearchIcon arrow />
        <input aria-label="搜索图层" className="w-full min-w-0 bg-transparent text-[11px] outline-none" />
      </label>
      <div className="flex-1 flex items-center pt-px pl-[15px] text-[#a8a8a8]">
        <button aria-label="合成微型流程图" className="w-[35px]">
          <Svg w={18} h={14}>
            <path d="M0 1h5v3H0zM10 3h5v3h-5zM10 8h5v3h-5zM12 11h6l-3 3z" />
            <Line d="M4 2.500h4v7h3M8 4.500h3" />
          </Svg>
        </button>
        <button aria-label="隐藏图层" className="w-[26px]">
          <Svg w={16} h={14}><path d="M0 8h16v5H0z" fill="#666" /><path d="M3 6a5 4 0 0 1 10 0zM1 7h14v1H1zM7 1h2v12H7z" /></Svg>
        </button>
        <button aria-label="帧混合" className="w-[26px]"><Svg w={15} h={14}>{film}</Svg></button>
        <button aria-label="运动模糊" className="w-[33px]"><Svg w={15} h={14}>{blur}</Svg></button>
        <button aria-label="图表编辑器">
          <Svg w={17} h={15}>
            <path d="M1.500 2.500h14v12h-14z" fill="none" stroke="currentColor" />
            <Line d="M3 5c6 0 5 7 11 7M4.500 0v3M8.500 0v3M12.500 0v3" w={1.300} />
          </Svg>
        </button>
      </div>
    </div>
    <div className="h-[21px] shrink-0 border-y border-black flex items-center bg-[#262626] text-[13px] text-[#c0c0c0] whitespace-nowrap">
      <div className="w-[68px] shrink-0 flex items-center pl-[4px] text-[#b0b0b0]">
        <Cell><path d="M1 6.500C4 2.500 9 2.500 12 6.500 9 10.500 4 10.500 1 6.500z" fill="none" stroke="currentColor" strokeWidth="1.300" /><circle cx="6.500" cy="6.500" r="2" /></Cell>
        <Cell><path d="M0 4h3l4-3v11L3 9H0z" /><Line d="M8.500 4v5M10.500 2.500c2 3 2 5 0 8" w={1.300} /></Cell>
        <Cell><circle cx="6.500" cy="6.500" r="3.300" /></Cell>
        <Cell><path d="M2 6h9v6H2z" /><Line d="M4 6V3.500a2.500 2.500 0 0 1 5 0V6" w={1.500} /><path d="M6 8h1v2H6z" fill="#222" /></Cell>
      </div>
      <ColSep />
      <div className="w-[31px] shrink-0 flex justify-center pl-[6px]">
        <Svg w={13} h={13}><path d="M1 1h5l7 7-5 5-7-7z" /><circle cx="3.500" cy="3.500" r="1" fill="#222" /></Svg>
      </div>
      <ColSep />
      <span className="w-[32px] shrink-0 pl-[6px] text-[11px] text-[#8e8e8e]">#</span>
      <ColSep />
      <span className="w-[201px] shrink-0 pl-[6px]">源名称</span>
      <ColSep />
      <div className="w-[135px] shrink-0 flex items-center pl-[3px] text-[#b0b0b0]">
        <Cell>{shy}</Cell>
        <Cell><circle cx="6.500" cy="6.500" r="2" fill="none" stroke="currentColor" strokeWidth="1.300" /><Line d="M6.500 1v3M6.500 9v3M1 6.500h3M9 6.500h3M3 3l1.500 1.500M10 3L8.500 4.500M3 10l1.500-1.500M10 10L8.500 8.500" /></Cell>
        <Cell><path d="M1 1h3v3H1zM9 9h3v3H9z" /><path d="M4 4l5 5" stroke="currentColor" strokeWidth="1.500" strokeDasharray="1.500 1" /></Cell>
        <span className="w-[15px] text-center text-[15px] leading-[15px] italic [font-family:'Liberation_Serif',serif]">fx</span>
        <Cell>{film}</Cell>
        <Cell>{blur}</Cell>
        <Cell><circle cx="6.500" cy="6.500" r="4.500" fill="none" stroke="currentColor" strokeWidth="1.300" /><path d="M9.500 3a4.500 4.500 0 0 0-6.300 6.500z" /></Cell>
        <Cell><Line d="M6.500 1.500l4.500 2.300v5.400l-4.500 2.300L2 9.200V3.800zM2 3.800l4.500 2.400L11 3.800M6.500 6.200v5.300" w={1.300} /></Cell>
      </div>
      <ColSep />
      <span className="w-[116px] shrink-0 pl-[7px]">父级和链接</span>
      <ColSep />
    </div>
    <div className="h-[18px] pb-[2px] shrink-0 flex items-center text-[13px] leading-[16px] text-[#c0c0c0] whitespace-nowrap">
      <button aria-label="图层开关" className="ml-[5px] w-[17px] h-[16px] flex items-center justify-center bg-[#161616] border border-[#303030] text-[#2d8ceb]">
        <Svg w={12} h={12}><Line d="M5 5.500h6.500v6H5zM3 9V3.500h7M1 7V1.500h7M8.500 7v3M7 8.500h3" w={1.200} /></Svg>
      </button>
      <button aria-label="转换控制" className="ml-[4px] text-[#a8a8a8]"><Svg w={12} h={12}><circle cx="4.500" cy="4.500" r="3.500" fill="none" stroke="currentColor" strokeWidth="1.300" /><path d="M4.500 4.500h6v6h-6z" fill="none" stroke="currentColor" strokeWidth="1.300" /></Svg></button>
      <button aria-label="入点出点" className="ml-[7px] text-[#a8a8a8]"><Svg w={12} h={12}><path d="M2 1h3v3l-1 2 1 2v3H2V7H0V5h2zM10 1H7v3l1 2-1 2v3h3V7h2V5h-2z" opacity=".8" /></Svg></button>
      <button aria-label="渲染时间" className="ml-[6px] text-[#a8a8a8]"><Svg w={13} h={12}><circle cx="5" cy="5" r="3.700" /><path d="M0 9h8l1-3V2h1v2h1V2h1v4l-2 3-2 2H0z" /></Svg></button>
      <span className="ml-[11px]">帧渲染时间</span>
      <span className="ml-[8px] text-[#5fdcae]">0毫秒</span>
      <button className="ml-auto mr-[134px] w-[134px] h-[16px] bg-[#1e1e1e] border border-[#303030] rounded-sm text-[12px] leading-[14px] text-[#8e8e8e]">切换开关/模式</button>
    </div>
  </div>
);

const frames = ['00000', '00010', '00020', '00030'];

const TimelineRight = () => {
  const [zoom, setZoom] = useState(70);

  return (
    <div className="flex flex-col">
      <div className="relative flex">
        <div className="flex-1 min-w-0 overflow-hidden bg-[#1b1b1b]">
          <div className="h-[5px] bg-[#232323]" />
          <div className="h-[11px] flex items-center border-t border-black">
            <div className="w-[6px] h-[9px] bg-[#2d8ceb] rounded-l-full" />
            <div className="w-[86px] h-[9px] bg-[#666666]" />
            <div className="w-[6px] h-[9px] bg-[#2d8ceb] rounded-r-full" />
            <div className="flex-1 h-[9px] mr-[7px] bg-[#3e3933] border border-[#4b4338]" />
          </div>
          <div className="h-[20px] -ml-[27px] flex bg-[#232323] text-[10px] leading-[13px] text-[#9a9a9a]">
            {frames.map(f => (
              <div key={f} className="w-[67px] shrink-0 flex flex-col items-center">
                {f}
                <span className="mt-[1px] w-px h-[6px] bg-[#9a9a9a]" />
              </div>
            ))}
          </div>
          <div className="h-[16px] flex border-t border-black">
            <div className="w-[6px] bg-[#2d8ceb] rounded-l-full" />
            <div className="flex-1 bg-[#606060] border-t border-[#8a8a8a]" />
          </div>
          <div className="h-[5px] pl-[7px] pt-[1px] border-b border-black"><div className="h-[3px] bg-[#18bd22]" /></div>
        </div>
        <div className="w-[18px] shrink-0 flex flex-col justify-end items-center border-b border-black pb-[3px] text-[#b0b0b0]">
          <Svg w={11} h={15}><path d="M0 2l1-1h9l1 1v7l-5.500 5L0 9z" /></Svg>
        </div>
        {/* playhead */}
        <svg width="12" height="37" viewBox="0 0 12 37" className="absolute left-[1px] top-[20px]" aria-hidden="true">
          <path d="M0 0h12v7l-6 7-6-7z" fill="#2d8ceb" />
          <path d="M4 7h4v1L7 10v3H6V9z" fill="#14324f" />
          <path d="M6.500 13v24" stroke="#4b9ef0" />
        </svg>
      </div>
      <div className="h-[18px] pb-px flex items-center pl-[4px] pr-[3px] text-[#b0b0b0]">
        <Svg w={12} h={6}><path d="M1 5l3-2 2 1 2-3 3 4z" /></Svg>
        <input
          type="range"
          aria-label="时间缩放"
          value={zoom}
          onChange={e => setZoom(Number(e.target.value))}
          className="ml-[14px] w-[43px] h-[10px] appearance-none bg-transparent [&::-webkit-slider-runnable-track]:h-[2px] [&::-webkit-slider-runnable-track]:bg-[#3c3c3c] [&::-webkit-slider-thumb]:appearance-none [&::-webkit-slider-thumb]:size-[10px] [&::-webkit-slider-thumb]:-mt-1 [&::-webkit-slider-thumb]:rounded-full [&::-webkit-slider-thumb]:border-2 [&::-webkit-slider-thumb]:border-solid [&::-webkit-slider-thumb]:border-[#a8a8a8] [&::-webkit-slider-thumb]:bg-[#232323]"
        />
        <Svg w={17} h={8} className="ml-[12px]"><path d="M0 7l5-5 1 1-3 4zM4 7l6-6 2 2 1-1 4 5z" /></Svg>
        <div className="ml-[6px] flex-1 h-[17px] bg-[#1e1e1e]"><div className="w-[49px] h-[15px] mt-px rounded-full bg-[#323232]" /></div>
        <Svg w={14} h={14} className="ml-[10px]">
          <path d="M6 3h8v8H6z" />
          <path d="M1 9l7-7M1 9l6 4V6z" fill="#232323" stroke="currentColor" strokeWidth="1.300" />
        </Svg>
      </div>
    </div>
  );
};

const Timeline = () => (
  <section className="flex-1 min-w-0 bg-[#232323] flex flex-col overflow-hidden">
    <header className="h-[27px] shrink-0 flex items-center pl-[11px] text-[13px] text-[#c0c0c0] whitespace-nowrap">
      <button aria-label="关闭" className="w-[15px] text-[#8a8a8a]"><Svg w={5} h={5}><Line d="M.5.5l4 4M4.500.5l-4 4" /></Svg></button>
      <div className="size-[10px] mr-[12px] bg-[#ab9775]" />
      <span className="mr-[10px]">合成 1</span>
      <MenuLines />
    </header>
    <div className="grid grid-cols-[606px_1fr]">
      <TimelineLeft />
      <TimelineRight />
    </div>
  </section>
);

/* ---------- align panel ---------- */

const aligns = [
  { label: '左对齐', d: 'M1 0h1v18H1zM3 2h8v6H3zM3 10h13v5H3z' },
  { label: '水平居中', d: 'M8 0h1v18H8zM5 2h7v6H5zM2 10h13v5H2z' },
  { label: '右对齐', d: 'M16 0h1v18h-1zM7 2h8v6H7zM2 10h13v5H2z' },
  { label: '顶对齐', d: 'M0 1h18v1H0zM3 3h5v13H3zM10 3h6v8h-6z' },
  { label: '垂直居中', d: 'M0 8h18v1H0zM3 2h5v13H3zM10 4h6v9h-6z' },
  { label: '底对齐', d: 'M0 16h18v1H0zM3 2h5v13H3zM10 7h6v8h-6z' },
];

const AlignPanel = () => (
  <section className="w-[206px] shrink-0 bg-[#232323] overflow-hidden text-[13px] text-[#8e8e8e] whitespace-nowrap">
    <header className="h-[26px] pr-[3px] flex items-center">
      <div className="w-[37px] overflow-hidden flex justify-end text-[#7c7c7c]"><span>跟踪器</span></div>
      <div className="ml-[39px]"><ActiveTab>对齐</ActiveTab></div>
      <div className="ml-[24px] w-[18px] overflow-hidden text-[#7c7c7c]">段落</div>
      <div className="w-px h-5 bg-[#303030]" />
      <div className="flex-1" />
      <More />
    </header>
    <div className="h-[27px] pl-[7px] pr-[2px] flex items-center">
      <label htmlFor="align-to" className="w-[86px] shrink-0">将图层对齐到:</label>
      <div className="flex-1 h-[18px] flex items-center pr-[4px] bg-[#262626] rounded-sm text-[#474747]">
        <select id="align-to" disabled className="appearance-none flex-1 min-w-0 pl-[8px] bg-transparent outline-none"><option>选区</option></select>
        <Chevron className="text-[#474747]" />
      </div>
    </div>
    <div className="h-[23px] pl-[11px] flex items-center gap-[16px] text-[#3d3d3d]">
      {aligns.map(a => (
        <button key={a.label} aria-label={a.label}><Svg w={18} h={18}><path d={a.d} /></Svg></button>
      ))}
    </div>
    <div className="mx-[6px]"><Rule /></div>
    <div className="h-[20px] pl-[7px] leading-[18px]">分布图层:</div>
    <div className="h-[4px] pl-[11px] flex gap-[16px] text-[#3d3d3d]">
      {[0, 1, 2].map(i => (
        <Svg key={i} w={18} h={4}><path d="M1 1h16v1H1z" /></Svg>
      ))}
      {[3, 4, 5].map(i => (
        <Svg key={i} w={18} h={4}><path d="M4 1h1v3H4zM13 1h1v3h-1z" /></Svg>
      ))}
    </div>
  </section>
);

export default function App() {
  return (
    <div className="h-screen flex flex-col overflow-hidden bg-[#171717] border-x border-[#19c6c8] select-none [font-family:'Noto_Sans','Noto_Sans_CJK_SC',sans-serif]">
      <MenuBar />
      <Toolbar />
      <main className="flex-1 min-h-0 flex mt-[2px] pl-px pr-px">
        <ProjectPanel />
        <CompPanel />
        <Strip />
        <div className="w-[159px] shrink-0 ml-[4px] flex flex-col gap-[4px]">
          <InfoPanel />
          <PreviewPanel />
          <CharacterPanel />
        </div>
      </main>
      <div className="shrink-0 flex gap-[4px] mt-[4px] pl-px pr-px">
        <Timeline />
        <AlignPanel />
      </div>
    </div>
  );
}
